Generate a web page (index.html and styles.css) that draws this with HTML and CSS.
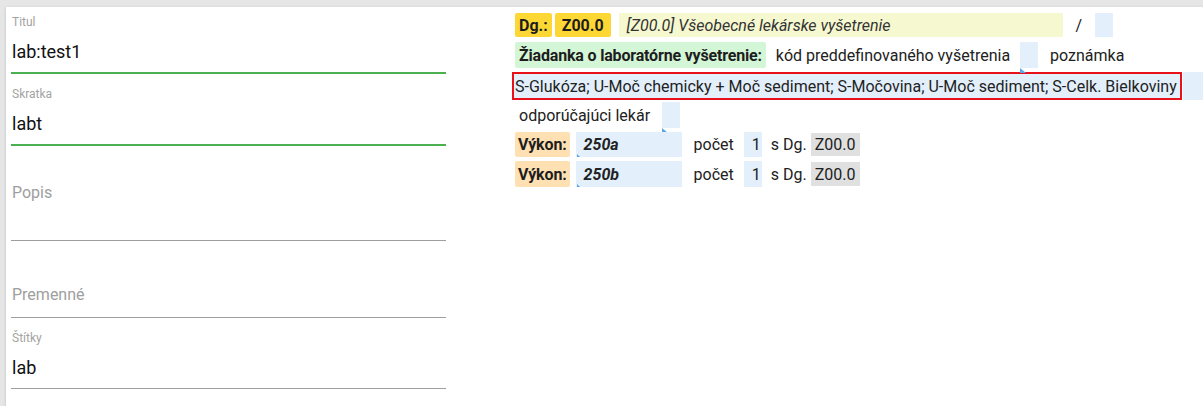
FILE: index.html
```html
<!DOCTYPE html>
<html lang="sk">
<head>
<meta charset="utf-8">
<title>Šablóna</title>
<link rel="stylesheet" href="styles.css">
</head>
<body>
<div class="card">
  <div class="form">
    <div class="field focused">
      <div class="label">Titul</div>
      <div class="value">lab:test1</div>
    </div>
    <div class="field focused">
      <div class="label">Skratka</div>
      <div class="value">labt</div>
    </div>
    <div class="field empty popis">
      <div class="placeholder">Popis</div>
    </div>
    <div class="field empty premenne">
      <div class="placeholder">Premenné</div>
    </div>
    <div class="field">
      <div class="label">Štítky</div>
      <div class="value">lab</div>
    </div>
  </div>

  <div class="doc">
    <div class="row row1">
      <span class="tag yellow">Dg.:</span>
      <span class="tag yellow code">Z00.0</span>
      <span class="diag">[Z00.0] Všeobecné lekárske vyšetrenie</span>
      <span class="slash">/</span>
      <span class="box small"></span>
    </div>
    <div class="row row2">
      <span class="tag green">Žiadanka o laboratórne vyšetrenie:</span>
      <span class="plain kod">kód preddefinovaného vyšetrenia</span>
      <span class="box small tri"></span>
      <span class="plain note">poznámka</span>
    </div>
    <div class="row row3">
      <span class="selected">S-Glukóza; U-Moč chemicky + Moč sediment; S-Močovina; U-Moč sediment; S-Celk. Bielkoviny</span>
      <span class="box tail"></span>
    </div>
    <div class="row row4">
      <span class="plain">odporúčajúci lekár</span>
      <span class="box small tri doctor"></span>
    </div>
    <div class="row row5">
      <span class="tag orange">Výkon:</span>
      <span class="box code-input mini-tri">250a</span>
      <span class="plain pocet">počet</span>
      <span class="box count">1</span>
      <span class="plain sdg">s Dg.</span>
      <span class="gray">Z00.0</span>
    </div>
    <div class="row row6">
      <span class="tag orange">Výkon:</span>
      <span class="box code-input mini-tri">250b</span>
      <span class="plain pocet">počet</span>
      <span class="box count">1</span>
      <span class="plain sdg">s Dg.</span>
      <span class="gray">Z00.0</span>
    </div>
  </div>
</div>
</body>
</html>
```

FILE: styles.css
```css
html, body {
  margin: 0;
  padding: 0;
}
body {
  background: #e6e6e6;
  font-family: Roboto, "Liberation Sans", Arial, sans-serif;
  color: #212121;
  overflow: hidden;
  width: 1203px;
  height: 406px;
}
.card {
  margin: 7px 0 0 6px;
  background: #ffffff;
  box-shadow: 0 1px 3px rgba(0, 0, 0, 0.18);
  height: 399px;
  display: flex;
  padding: 6px 0 0 5px;
  box-sizing: border-box;
}

/* ---------- left form ---------- */
.form {
  width: 435px;
  flex: none;
  display: flex;
  flex-direction: column;
}
.field {
  margin-bottom: 11px;
  border-bottom: 1px solid #9e9e9e;
}
.field.focused {
  border-bottom: 2px solid #4caf50;
}
.label {
  font-size: 12px;
  line-height: 18px;
  color: #a3a3a3;
  padding-left: 1px;
}
.value {
  font-size: 18px;
  line-height: 41px;
  height: 41px;
  color: #111;
  padding-left: 1px;
}
.placeholder {
  font-size: 16px;
  line-height: 20px;
  color: #9e9e9e;
  padding-left: 1px;
}
.popis {
  padding: 26px 0 37px;
}
.premenne {
  padding: 33px 0 12px;
}

/* ---------- right document ---------- */
.doc {
  margin-left: 66px;
  display: flex;
  flex-direction: column;
  font-size: 16px;
  flex: 1;
  min-width: 0;
}
.row {
  display: flex;
  align-items: stretch;
  padding-left: 3px;
  white-space: nowrap;
}
.row1 { height: 24px; }
.row2 { height: 26px; margin-top: 5px; }
.row3 { height: 28px; margin-top: 4px; padding-left: 0; }
.row4 { height: 26px; margin-top: 2px; }
.row5 { height: 25px; margin-top: 4px; }
.row6 { height: 26px; margin-top: 4px; }

.tag {
  display: flex;
  align-items: center;
  font-weight: 700;
  padding: 0 4px;
  border-radius: 2px;
  color: #1d1d1d;
}
.yellow { background: #fdd835; }
.yellow.code {
  margin-left: 3px;
  padding: 0 7px;
}
.green {
  background: #d3f6d6;
  letter-spacing: -0.18px;
}
.orange {
  background: #ffe0b2;
  padding: 0 3px;
  letter-spacing: -0.15px;
}

.diag {
  display: flex;
  align-items: center;
  margin-left: 8px;
  width: 436px;
  padding-left: 8px;
  background: #f6f9d0;
  font-style: italic;
  color: #333;
}
.slash {
  display: flex;
  align-items: center;
  margin-left: 13px;
}
.plain {
  display: flex;
  align-items: center;
  padding: 0 4px;
}
.box {
  position: relative;
  background: #e3f0fc;
  display: flex;
  align-items: center;
}
.box.small { width: 18px; }
.row1 .box.small { margin-left: 13px; }
.kod { margin-left: 6px; }
.row2 .box.small { margin-left: 6px; }
.note { margin-left: 8px; }
.box.tri::after {
  content: "";
  position: absolute;
  left: 0;
  bottom: -5px;
  border-left: 6px solid #5aa6ea;
  border-top: 5px solid transparent;
}
.doctor { margin-left: 8px; }

.selected {
  display: flex;
  align-items: center;
  border: 2px solid #e8101a;
  background: #e3f0fc;
  padding: 0 3px 0 1px;
  color: #222;
}
.box.tail {
  width: 30px;
  margin-left: 1px;
}

.code-input {
  margin-left: 6px;
  width: 98px;
  padding-left: 8px;
  font-weight: 700;
  font-style: italic;
  color: #222;
}
.mini-tri::after {
  content: "";
  position: absolute;
  left: 1px;
  bottom: 0;
  border-left: 3px solid #5aa6ea;
  border-top: 3px solid transparent;
}
.pocet { margin-left: 8px; }
.count {
  margin-left: 6px;
  width: 18px;
  justify-content: flex-end;
  padding-right: 1px;
  box-sizing: border-box;
  color: #222;
}
.sdg { margin-left: 6px; padding: 0 4px 0 3px; }
.gray {
  display: flex;
  align-items: center;
  background: #e0e0e0;
  padding: 0 4px;
  margin: 1px 0;
}
```
